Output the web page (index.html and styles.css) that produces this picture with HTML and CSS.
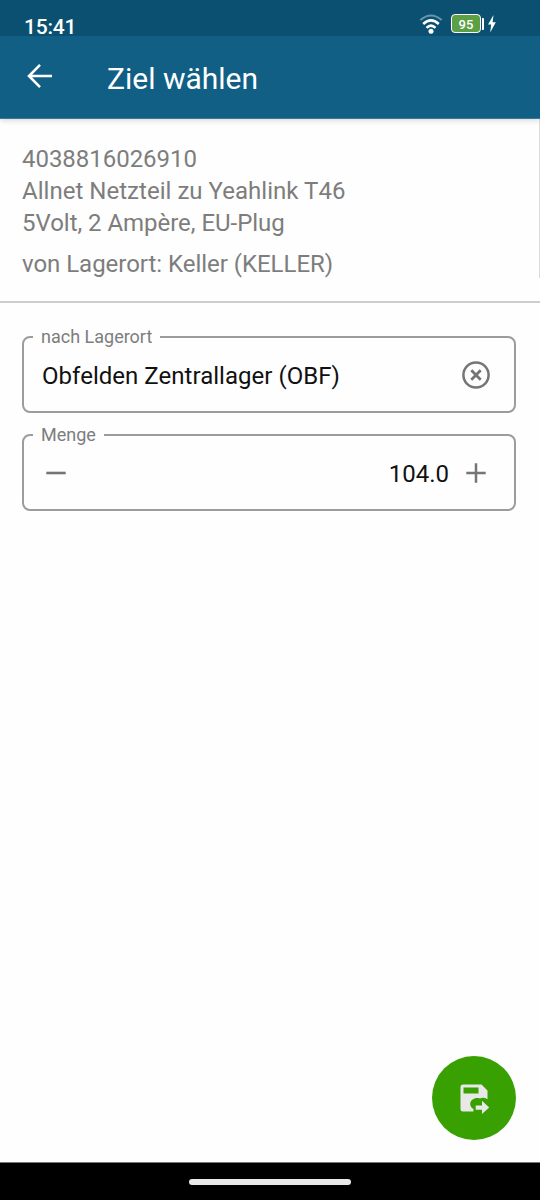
FILE: index.html
```html
<!DOCTYPE html>
<html lang="de">
<head>
<meta charset="utf-8">
<title>Ziel wählen</title>
<link rel="stylesheet" href="styles.css">
</head>
<body>
<div class="screen">
  <div class="status">
    <span class="time">15:41</span>
    <svg class="wifi" width="24" height="22" viewBox="0 0 24 22" fill="none" stroke="#fff" stroke-width="2.5">
      <path d="M1.3 6.100Q12 -3.100 22.700 6.100" stroke="#6694ac" stroke-width="2"/>
      <path d="M4.2 10Q12 2.800 19.800 10"/>
      <path d="M7.500 13.800Q12 9.500 16.500 13.800"/>
      <circle cx="12" cy="17.200" r="2.500" fill="#fff" stroke="none"/>
    </svg>
    <span class="battery">95</span>
    <span class="battery-cap"></span>
    <svg class="bolt" width="8" height="18" viewBox="0 0 8 18"><path d="M5.5 0L0 9.4H3.2L2.2 17.5L7.8 7.2H4.6Z" fill="#fff"/></svg>
  </div>
  <header class="appbar">
    <svg class="back" width="26" height="26" viewBox="0 0 26 26" fill="none" stroke="#fff" stroke-width="2.6"><path d="M25 13H2.5M13 1.8L2 13L13 24.2"/></svg>
    <h1 class="title">Ziel wählen</h1>
  </header>
  <section class="article">
    <p class="line number">4038816026910</p>
    <p class="line name">Allnet Netzteil zu Yeahlink T46</p>
    <p class="line detail">5Volt, 2 Ampère, EU-Plug</p>
    <p class="line source">von Lagerort: Keller (KELLER)</p>
    <span class="scrollbar"></span>
  </section>
  <main class="form">
    <fieldset class="field">
      <legend class="label">nach Lagerort</legend>
      <div class="row">
        <span class="value place">Obfelden Zentrallager (OBF)</span>
        <svg width="28" height="28" viewBox="0 0 28 28" fill="none" stroke="#757575" stroke-width="2.5"><circle cx="14" cy="14" r="12.6"/><path d="M9.3 9.3L18.7 18.7M18.7 9.3L9.3 18.7" stroke-width="2.8"/></svg>
      </div>
    </fieldset>
    <fieldset class="field">
      <legend class="label">Menge</legend>
      <div class="row amount">
        <svg class="minus" width="20" height="20" viewBox="0 0 20 20" stroke="#757575" stroke-width="2.6"><path d="M0.3 10H19.7"/></svg>
        <span class="value quantity">104.0</span>
        <svg class="plus" width="20" height="20" viewBox="0 0 20 20" stroke="#757575" stroke-width="2.5"><path d="M0.3 10H19.7M10 0.3V19.7"/></svg>
      </div>
    </fieldset>
  </main>
  <div class="actions">
    <div class="save">
      <svg class="save-icon" width="30" height="30" viewBox="0 0 30 30"><path fill="#e8e8e8" fill-rule="evenodd" d="M3 0.5H21.5L27.5 6.5V15.2C24.5 13.4 21.5 13.5 20 14.4C15.500 12.800 10.200 15.500 10.200 20C10.200 22.800 12 24.300 13.500 25V27.500H3Q0.500 27.500 0.500 25V3Q0.500 0.500 3 0.500ZM3.500 3.500V9.500H18.500V3.500Z"/><path fill="#e8e8e8" d="M15.700 21.400H22V16.700L29.200 23.500L22 30V25.700H15.700Z"/></svg>
    </div>
  </div>
  <div class="navbar"><span class="handle"></span></div>
</div>
</body>
</html>
```
FILE: styles.css
```css
* { box-sizing: border-box; }
body { margin: 0; font-family: Roboto, sans-serif; background: #fff; }
svg { display: block; flex: none; }
.screen { width: 540px; height: 1200px; display: flex; flex-direction: column; background: #fefefe; }
.status { height: 36px; flex: none; display: flex; align-items: flex-start; padding: 14px 44px 0 24px; background: #0b5070; color: #fff; z-index: 2; }
.time { font-size: 21px; font-weight: 500; line-height: 26px; letter-spacing: -0.2px; margin-right: auto; }
.wifi { margin-right: 8px; }
.battery { width: 30px; height: 19px; border: 1.5px solid #fff; border-radius: 4px; background: #5d9f45; font-size: 13px; font-weight: 500; line-height: 19px; text-align: center; letter-spacing: 0.2px; }
.battery-cap { width: 2px; height: 12px; margin: 4px 4px 0 1px; background: #fff; border-radius: 0 1px 1px 0; }
.bolt { margin-top: 1px; }
.appbar { height: 83px; flex: none; display: flex; align-items: center; padding: 0 27px 3px; background: #115f85; border-bottom: 1px solid #39799a; box-shadow: 0 1px 6px rgba(0, 0, 0, 0.18); color: #fff; z-index: 1; }
.back { margin-right: 54px; }
.title { margin: 6px 0 0; font-size: 30px; font-weight: 400; line-height: 36px; }
.article { position: relative; height: 184px; flex: none; padding: 23.5px 22px 0; border-bottom: 2px solid #cdcdcd; color: #7d7d7d; }
.line { margin: 0; font-size: 24px; line-height: 32.3px; white-space: nowrap; }
.number, .detail, .source { letter-spacing: -0.03px; }
.name { letter-spacing: 0.03px; }
.source { margin-top: 9px; }
.scrollbar { position: absolute; right: 0; top: 0; width: 1px; height: 159px; background: #dcdcdc; }
.form { flex: 1; padding: 24px 24px 0 22px; }
.field { min-width: 0; width: 494px; height: 86px; margin: 0 0 12px; padding: 0; border: 2px solid #9c9c9c; border-radius: 8px; }
.label { height: 20px; margin-left: 9px; padding: 0 8px; color: #7d7d7d; font-size: 18px; line-height: 20px; }
.row { height: 56px; display: flex; align-items: center; justify-content: space-between; padding: 0 24px 0 18px; }
.value { font-size: 24px; line-height: 32px; color: #111; }
.place { margin-top: 2px; letter-spacing: 0.03px; }
.amount { height: 55px; padding: 0 28px 0 22px; }
.quantity { margin: 3px 17px 0 auto; }
.actions { flex: none; display: flex; justify-content: flex-end; padding: 0 24px 22px 0; }
.save { width: 84px; height: 84px; display: flex; align-items: center; justify-content: center; border-radius: 50%; background: #38a000; }
.save-icon { margin: 2px 0 0 2px; }
.navbar { height: 38px; flex: none; display: flex; justify-content: center; padding-top: 16px; background: #000; border-top: 1px solid #777; }
.handle { width: 162px; height: 6px; border-radius: 3px; background: #ebe8ea; }
```
